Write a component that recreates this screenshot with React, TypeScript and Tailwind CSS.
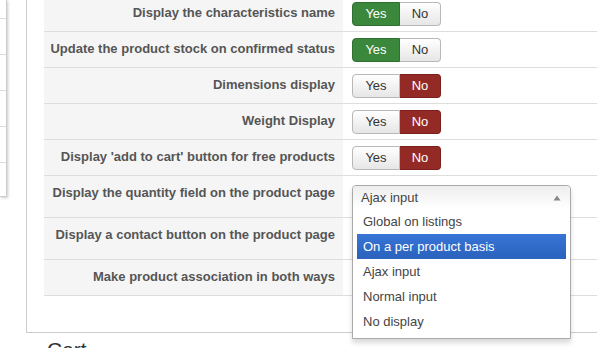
import React from "react";

type Row = {
  label: string;
  kind: "yes" | "no" | "select" | "empty";
  tall?: boolean;
};

const rows: Row[] = [
  { label: "Display the characteristics name", kind: "yes" },
  { label: "Update the product stock on confirmed status", kind: "yes" },
  { label: "Dimensions display", kind: "no" },
  { label: "Weight Display", kind: "no" },
  { label: "Display 'add to cart' button for free products", kind: "no" },
  { label: "Display the quantity field on the product page", kind: "select", tall: true },
  { label: "Display a contact button on the product page", kind: "empty", tall: true },
  { label: "Make product association in both ways", kind: "empty" },
];

const options = ["Global on listings", "On a per product basis", "Ajax input", "Normal input", "No display"];

const YesNo = ({ value }: { value: "yes" | "no" }) => {
  const off = "bg-gradient-to-b from-white to-[#e6e6e6] border-[#b8b8b8] text-[#333]";
  return (
    <div className="flex h-[24px] text-[13px] leading-[22px]">
      <span
        className={
          "w-[48px] rounded-l-[4px] border text-center " +
          (value === "yes" ? "border-[#2f6f2f] bg-[#3b873b] text-white" : off)
        }
      >
        Yes
      </span>
      <span
        className={
          "w-[41px] rounded-r-[4px] border border-l-0 text-center " +
          (value === "no" ? "border-[#7a1f1b] bg-[#942a25] text-white" : off)
        }
      >
        No
      </span>
    </div>
  );
};

const Dropdown = () => (
  <div className="relative h-[28px] w-[219px]">
    <div className="absolute left-0 top-0 z-10 w-[219px] rounded-t-[4px] border border-[#aaa] bg-white text-[13px] text-[#444] shadow-[0_4px_5px_rgba(0,0,0,0.15)]">
      <div className="flex h-[23px] items-center justify-between rounded-t-[4px] bg-gradient-to-b from-[#eee] to-white pl-[8px] pr-[9px]">
        <span>Ajax input</span>
        <svg width="8" height="6" viewBox="0 0 8 6">
          <path d="M4 0.5 L7.5 5.5 L0.5 5.5 Z" fill="#888" />
        </svg>
      </div>
      <ul className="px-[4px] pb-[4px]">
        {options.map((o, i) => (
          <li
            key={o}
            className={
              "h-[25px] px-[6px] leading-[25px] " +
              (i === 1 ? "bg-gradient-to-b from-[#3875d7] to-[#2a62bc] text-white" : "")
            }
          >
            {o}
          </li>
        ))}
      </ul>
    </div>
  </div>
);

export default function App() {
  return (
    <div className="h-[348px] w-[609px] overflow-hidden bg-white font-['Liberation_Sans',Arial,sans-serif]">
      <div className="flex items-start">
        <div className="flex h-[197px] w-[7px] flex-col border-r border-b border-[#ccc] bg-white shadow-[1px_1px_3px_rgba(0,0,0,0.2)]">
          <div className="h-[19px] border-b border-[#ddd]" />
          <div className="h-[36px] border-b border-[#ddd]" />
          <div className="h-[36px] border-b border-[#ddd]" />
          <div className="h-[36px] border-b border-[#ddd]" />
          <div className="h-[36px] border-b border-[#ddd]" />
        </div>

        <div className="ml-[19px] flex-1">
          <div className="mr-[12px] border-l border-b border-[#ccc] pl-[17px] pb-[36px]">
            <div className="mt-[-4px]">
              {rows.map((r) => (
                <div
                  key={r.label}
                  className={
                    "grid grid-cols-[299px_1fr] border-b border-[#ddd] " +
                    (r.tall ? "h-[42px]" : "h-[36px]")
                  }
                >
                  <div className="bg-[#f5f5f5] pr-[8px] pt-[8px] text-right text-[13px] font-bold leading-[18px] text-[#555]">
                    {r.label}
                  </div>
                  <div className={"pl-[9px] " + (r.kind === "select" ? "pt-[9px]" : "pt-[6px]")}>
                    {r.kind === "yes" && <YesNo value="yes" />}
                    {r.kind === "no" && <YesNo value="no" />}
                    {r.kind === "select" && <Dropdown />}
                  </div>
                </div>
              ))}
            </div>
          </div>
          <h3 className="ml-[21px] mt-[5px] text-[21px] leading-[24px] text-[#333]">Cart</h3>
        </div>
      </div>
    </div>
  );
}
